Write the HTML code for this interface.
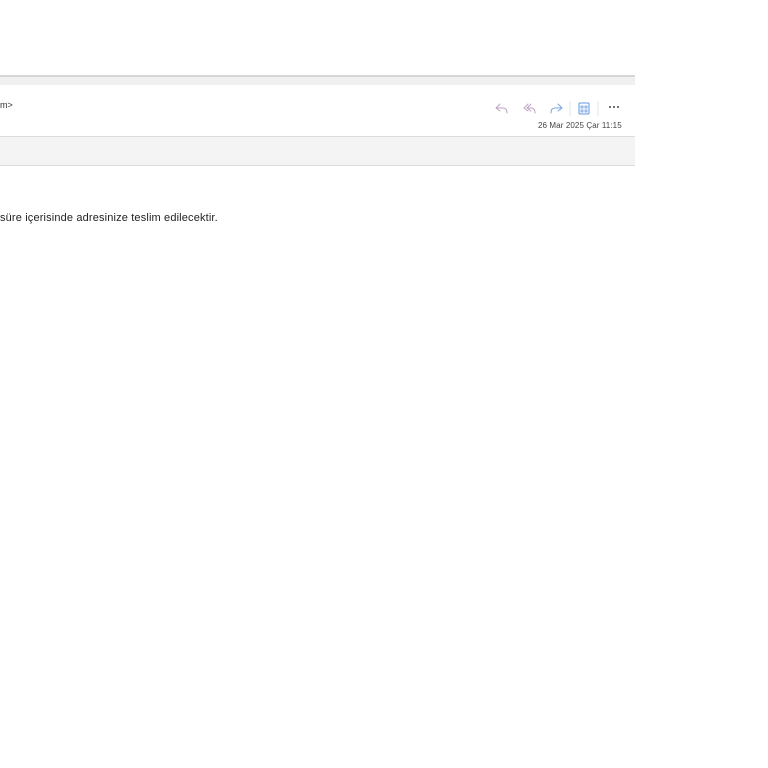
<!DOCTYPE html>
<html><head><style>
body{margin:0;width:768px;height:768px;background:#fff;position:relative;overflow:hidden;font-family:"Liberation Sans",sans-serif;}
.a{position:absolute;}
</style></head><body>
<div class="a" style="left:0;top:75px;width:635px;height:2px;background:#d6d6d6"></div>
<div class="a" style="left:0;top:77px;width:635px;height:8px;background:#f0f0f0"></div>
<div class="a" style="left:0;top:100px;font-size:9px;color:#333">m&gt;</div>
<svg class="a" style="left:494px;top:101px" width="140" height="16" viewBox="0 0 140 16">
<g fill="none" stroke-width="1" stroke-linecap="round" opacity=".8">
<path d="M2 7 L6 3 M2 7 L6 10 M2 7 H9 Q13 7 13 12" stroke="#b08ab8"/>
<path d="M30 7 L34 3 M30 7 L34 10 M33 7 L37 3 M33 7 L37 10 M33 7 H37 Q41 7 41 12" stroke="#b08ab8"/>
<path d="M68 7 L64 3 M68 7 L64 10 M68 7 H61 Q57 7 57 12" stroke="#5b8fd0"/>
<path d="M76 1 V15 M104 1 V15" stroke="#e0e0e0"/>
<rect x="85" y="2" width="10" height="11" rx="1" stroke="#3a7bd5"/>
<path d="M87 5h2v2h-2zM91 5h2v2h-2zM87 9h2v2h-2zM91 9h2v2h-2z" stroke="#3a7bd5" stroke-width=".8"/>
</g>
<g fill="#444"><circle cx="116" cy="6" r="1"/><circle cx="120" cy="6" r="1"/><circle cx="124" cy="6" r="1"/></g>
</svg>
<div class="a" style="left:538px;top:121px;font-size:8px;color:#444;letter-spacing:.1px">26 Mar 2025 Çar 11:15</div>
<div class="a" style="left:0;top:136px;width:635px;height:1px;background:#dcdcdc"></div>
<div class="a" style="left:0;top:137px;width:635px;height:28px;background:#f4f4f4"></div>
<div class="a" style="left:0;top:165px;width:635px;height:1px;background:#dcdcdc"></div>
<div class="a" style="left:0;top:212px;font-size:11px;color:#222;letter-spacing:.15px">süre içerisinde adresinize teslim edilecektir.</div>
</body></html>
